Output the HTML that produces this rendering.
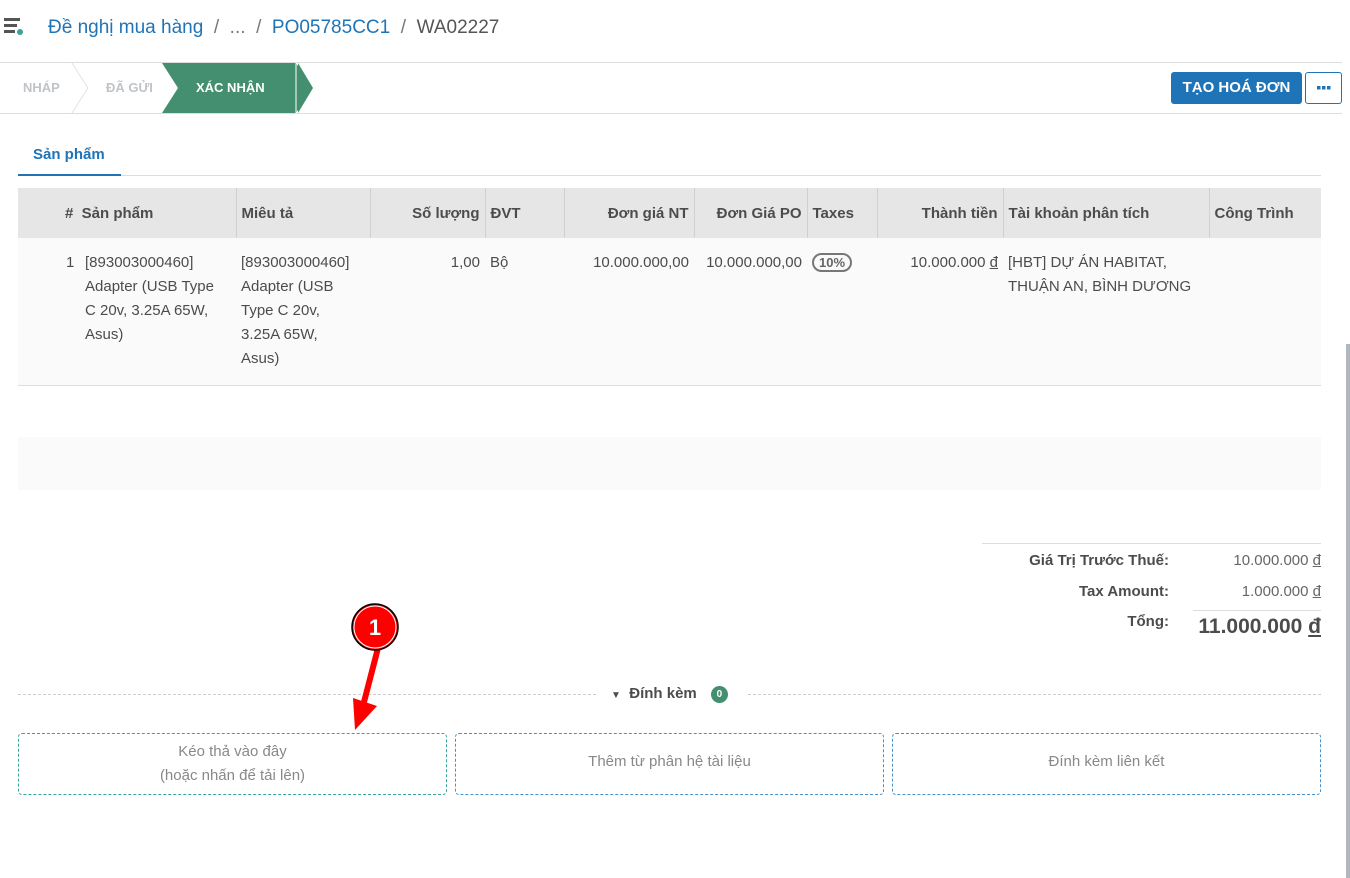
<!DOCTYPE html>
<html><head><meta charset="utf-8"><style>
*{box-sizing:border-box;margin:0;padding:0}
body{width:1350px;height:878px;overflow:hidden;background:#fff;font-family:"Liberation Sans",sans-serif;color:#4c4c4c;position:relative;font-size:15px}
.abs{position:absolute}
.bc{left:48px;top:17px;font-size:19px;color:#777;white-space:nowrap}
.bc a{color:#1f74b8;text-decoration:none}
.sb{left:0;top:62px;width:1342px;height:52px;border-top:1px solid #dedede;border-bottom:1px solid #dedede}
.btn{left:1171px;top:72px;width:131px;height:32px;background:#1f74b8;color:#fff;font-weight:bold;font-size:15px;border-radius:3px;text-align:center;line-height:32px}
.btn2{left:1305px;top:72px;width:37px;height:32px;border:1px solid #1f74b8;border-radius:3px;color:#1f74b8;text-align:center;line-height:30px;font-weight:bold}
table{position:absolute;left:18px;top:188px;width:1303px;border-collapse:collapse;font-size:15px}
th{background:#e6e6e6;height:50px;font-weight:bold;text-align:left;padding:0 5px;border-left:1px solid #d0d0d0;color:#4c4c4c}
td{background:#fafafa;vertical-align:top;padding:13px 5px;line-height:24px;height:147px;border-bottom:1px solid #ddd}
.r{text-align:right}
.tot{font-size:15px;white-space:nowrap}
</style></head><body>
<svg class="abs" style="left:4px;top:17px" width="22" height="22" viewBox="0 0 22 22"><rect x="0" y="1" width="16" height="3" fill="#555"/><rect x="0" y="7" width="13" height="3" fill="#555"/><rect x="0" y="13" width="11" height="3" fill="#555"/><circle cx="16" cy="15" r="3" fill="#3aa39c"/></svg>
<div class="abs bc"><a>Đề nghị mua hàng</a> &nbsp;/&nbsp; ... &nbsp;/&nbsp; <a>PO05785CC1</a> &nbsp;/&nbsp; <span style="color:#555">WA02227</span></div>
<div class="abs sb"></div>
<svg class="abs" style="left:0;top:63px" width="320" height="50"><polyline points="72,0 88,25 72,50" fill="none" stroke="#e3e3e3"/><polygon points="162,0 296,0 312,25 296,50 162,50 178,25" fill="#438f6f"/><line x1="296" y1="0" x2="296" y2="50" stroke="#fff"/><polygon points="298,0 313,25 298,50" fill="#438f6f"/></svg>
<div class="abs" style="left:23px;top:80px;font-size:13px;font-weight:bold;color:#c0c4c8">NHÁP</div>
<div class="abs" style="left:106px;top:80px;font-size:13px;font-weight:bold;color:#c0c4c8">ĐÃ GỬI</div>
<div class="abs" style="left:196px;top:80px;font-size:13px;font-weight:bold;color:#fff">XÁC NHẬN</div>
<div class="abs btn">TẠO HOÁ ĐƠN</div>
<div class="abs btn2"><svg width="14" height="4" style="vertical-align:middle"><rect x="0" y="0" width="3.5" height="3.5" fill="#1f74b8"/><rect x="5" y="0" width="3.5" height="3.5" fill="#1f74b8"/><rect x="10" y="0" width="3.5" height="3.5" fill="#1f74b8"/></svg></div>
<div class="abs" style="left:33px;top:146px;font-weight:bold;color:#1f74b8;font-size:15px">Sản phẩm</div>
<div class="abs" style="left:18px;top:175px;width:1303px;height:1px;background:#ddd"></div>
<div class="abs" style="left:18px;top:174px;width:103px;height:2px;background:#1f74b8"></div>
<table><tr>
<th style="width:218px;border-left:none;padding-left:47px"># &nbsp;Sản phẩm</th><th style="width:134px">Miêu tả</th><th class="r" style="width:115px">Số lượng</th><th style="width:79px">ĐVT</th><th class="r" style="width:130px">Đơn giá NT</th><th class="r" style="width:113px">Đơn Giá PO</th><th style="width:70px">Taxes</th><th class="r" style="width:126px">Thành tiền</th><th style="width:206px">Tài khoản phân tích</th><th>Công Trình</th></tr>
<tr><td style="padding-left:48px"><div style="display:flex"><span style="width:19px;flex:none">1</span><span style="width:138px;flex:none">[893003000460] Adapter (USB Type C 20v, 3.25A 65W, Asus)</span></div></td>
<td><div style="width:118px">[893003000460] Adapter (USB Type C 20v, 3.25A 65W, Asus)</div></td><td class="r">1,00</td><td>Bộ</td><td class="r">10.000.000,00</td><td class="r">10.000.000,00</td>
<td><span style="border:2px solid #777;border-radius:10px;padding:0 5px;font-weight:bold;font-size:13px;color:#666">10%</span></td>
<td class="r">10.000.000 <u>đ</u></td><td>[HBT] DỰ ÁN HABITAT, THUẬN AN, BÌNH DƯƠNG</td><td></td></tr></table>
<div class="abs" style="left:18px;top:437px;width:1303px;height:53px;background:#fafafa"></div>
<div class="abs" style="left:982px;top:543px;width:339px;height:1px;background:#ddd"></div>
<div class="abs tot" style="right:181px;top:552px;font-weight:bold">Giá Trị Trước Thuế:</div>
<div class="abs tot" style="right:29px;top:552px;color:#666">10.000.000 <u>đ</u></div>
<div class="abs tot" style="right:181px;top:583px;font-weight:bold">Tax Amount:</div>
<div class="abs tot" style="right:29px;top:583px;color:#666">1.000.000 <u>đ</u></div>
<div class="abs" style="left:1193px;top:610px;width:128px;height:1px;background:#ddd"></div>
<div class="abs tot" style="right:181px;top:613px;font-weight:bold">Tổng:</div>
<div class="abs tot" style="right:29px;top:615px;font-weight:bold;font-size:21px">11.000.000 <u>đ</u></div>
<div class="abs" style="left:18px;top:694px;width:578px;border-top:1px dashed #ccc"></div>
<div class="abs" style="left:748px;top:694px;width:573px;border-top:1px dashed #ccc"></div>
<div class="abs" style="left:611px;top:685px;font-weight:bold;font-size:15px"><span style="font-size:10px">▼</span>&nbsp; Đính kèm <span style="display:inline-block;width:17px;height:17px;border-radius:50%;background:#438f6f;color:#fff;font-size:10px;text-align:center;line-height:17px;margin-left:10px;vertical-align:1px">0</span></div>
<div class="abs" style="left:18px;top:733px;width:429px;height:62px;border:1px dashed #3aa39c;border-radius:4px;text-align:center;color:#888;padding-top:6px;line-height:24px">Kéo thả vào đây<br>(hoặc nhấn để tải lên)</div>
<div class="abs" style="left:455px;top:733px;width:429px;height:62px;border:1px dashed #4a90c8;border-radius:4px;text-align:center;color:#888;line-height:56px">Thêm từ phân hệ tài liệu</div>
<div class="abs" style="left:892px;top:733px;width:429px;height:62px;border:1px dashed #4a90c8;border-radius:4px;text-align:center;color:#888;line-height:56px">Đính kèm liên kết</div>
<div class="abs" style="left:1346px;top:344px;width:4px;height:534px;background:#b0b7bf"></div>
<svg class="abs" style="left:340px;top:600px" width="70" height="140"><line x1="38" y1="48" x2="24" y2="102" stroke="#f00" stroke-width="6"/><polygon points="13,98 37,106 15,130" fill="#f00"/><circle cx="35" cy="27" r="23" fill="#f00" stroke="#000" stroke-width="1.5"/><circle cx="35" cy="27" r="21" fill="none" stroke="#fff" stroke-width="1"/><text x="35" y="35" text-anchor="middle" fill="#fff" font-family="Liberation Sans" font-weight="bold" font-size="22">1</text></svg>
</body></html>
